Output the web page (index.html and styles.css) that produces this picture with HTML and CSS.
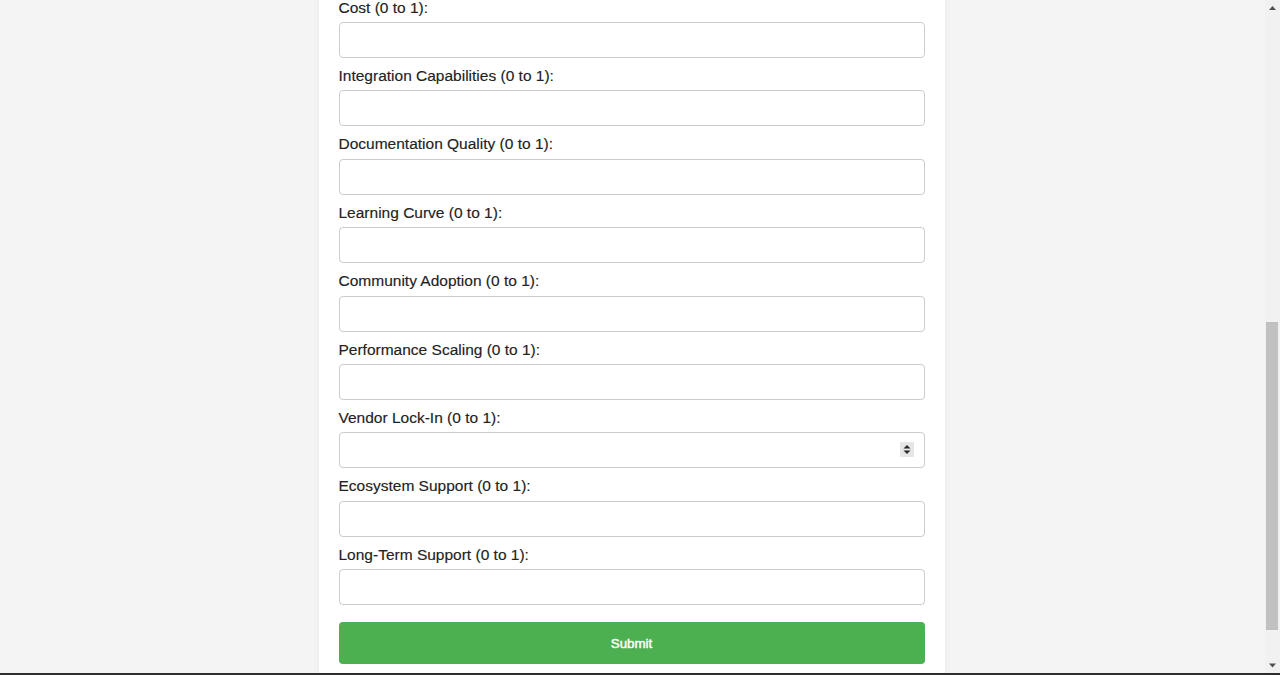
FILE: index.html
```html
<!DOCTYPE html>
<html lang="en">
<head>
<meta charset="utf-8">
<title>Technology Evaluation</title>
<link rel="stylesheet" href="styles.css">
</head>
<body>
<div class="container">
  <h1 class="title">Technology Evaluation</h1>
  <p class="intro">Rate each criterion on a scale from 0 to 1.</p>
  <form class="form">
    <label class="field-label">Scalability (0 to 1):</label>
    <input class="field-input" type="text">
    <label class="field-label">Performance (0 to 1):</label>
    <input class="field-input" type="text">
    <label class="field-label">Security (0 to 1):</label>
    <input class="field-input" type="text">
    <label class="field-label">Ease of Use (0 to 1):</label>
    <input class="field-input" type="text">
    <label class="field-label">Flexibility (0 to 1):</label>
    <input class="field-input" type="text">
    <label class="field-label">Maintainability (0 to 1):</label>
    <input class="field-input" type="text">
    <label class="field-label">Reliability (0 to 1):</label>
    <input class="field-input" type="text">
    <label class="field-label">Community Support (0 to 1):</label>
    <input class="field-input" type="text">
    <label class="field-label" id="cost-label">Cost (0 to 1):</label>
    <input class="field-input" type="text">
    <label class="field-label">Integration Capabilities (0 to 1):</label>
    <input class="field-input" type="text">
    <label class="field-label">Documentation Quality (0 to 1):</label>
    <input class="field-input" type="text">
    <label class="field-label">Learning Curve (0 to 1):</label>
    <input class="field-input" type="text">
    <label class="field-label">Community Adoption (0 to 1):</label>
    <input class="field-input" type="text">
    <label class="field-label">Performance Scaling (0 to 1):</label>
    <input class="field-input" type="text">
    <label class="field-label">Vendor Lock-In (0 to 1):</label>
    <div class="number-wrap">
      <input class="field-input number-input" type="number" step="0.01" min="0" max="1">
      <span class="spinner" aria-hidden="true">
        <svg width="14" height="15" viewBox="0 0 14 15">
          <rect x="0" y="0" width="14" height="15" rx="1" fill="#e6e6e6"/>
          <path d="M3.5 6.5 L7 3 L10.5 6.5 Z" fill="#2b2b2b"/>
          <path d="M3.5 8.5 L7 12 L10.5 8.5 Z" fill="#2b2b2b"/>
        </svg>
      </span>
    </div>
    <label class="field-label">Ecosystem Support (0 to 1):</label>
    <input class="field-input" type="text">
    <label class="field-label">Long-Term Support (0 to 1):</label>
    <input class="field-input" type="text">
    <button class="submit" type="button">Submit</button>
  </form>
</div>
<div class="scrollbar" aria-hidden="true">
  <div class="sb-btn">
    <svg width="15" height="15" viewBox="0 0 15 15"><path d="M4 10 L7.5 6 L11 10 Z" fill="#505050"/></svg>
  </div>
  <div class="sb-track"><div class="sb-thumb"></div></div>
  <div class="sb-btn">
    <svg width="15" height="15" viewBox="0 0 15 15"><path d="M4 5.5 L7.5 9.5 L11 5.5 Z" fill="#505050"/></svg>
  </div>
</div>
<div class="taskbar-edge"></div>
<script src="script.js"></script>
</body>
</html>
```

FILE: styles.css
```css
html, body {
  margin: 0;
}
body {
  background: #f4f4f4;
  font-family: Arial, "Liberation Sans", sans-serif;
  color: #333;
  padding: 20px 17px 57px 0;
}
.container {
  width: 586px;
  margin: 0 auto;
  padding: 20px;
  background: #fff;
  border-radius: 5px;
  box-shadow: 0 0 6px rgba(0, 0, 0, 0.05);
}
.title {
  margin: 0 0 10px;
  font-size: 26px;
  line-height: 30px;
  text-align: center;
}
.intro {
  margin: 0 0 24.9px;
  font-size: 16px;
  line-height: 18.4px;
  text-align: center;
}
.form {
  display: flex;
  flex-direction: column;
}
.field-label {
  display: block;
  font-size: 15.5px;
  line-height: 18.4px;
  margin-bottom: 5px;
  color: #222;
  -webkit-text-stroke: 0.15px #222;
}
.field-input {
  box-sizing: border-box;
  width: 100%;
  height: 36px;
  margin: 0 0 9px;
  padding: 8px 10px;
  border: 1px solid #ccc;
  border-radius: 4px;
  font-family: Arial, "Liberation Sans", sans-serif;
  font-size: 16px;
  background: #fff;
}
.number-wrap {
  position: relative;
}
.number-input {
  -moz-appearance: textfield;
}
.number-input::-webkit-inner-spin-button,
.number-input::-webkit-outer-spin-button {
  -webkit-appearance: none;
  margin: 0;
}
.spinner {
  position: absolute;
  right: 11px;
  top: 10px;
  width: 14px;
  height: 15px;
  display: flex;
}
.submit {
  margin-top: 8px;
  height: 42px;
  width: 100%;
  border: none;
  border-radius: 4px;
  background: #4caf50;
  color: #fff;
  font-family: Arial, "Liberation Sans", sans-serif;
  font-size: 13.33px;
  font-weight: normal;
  -webkit-text-stroke: 0.45px #fff;
}
.scrollbar {
  position: fixed;
  top: 0;
  right: 0;
  bottom: 2px;
  width: 15px;
  background: #f1f1f1;
  display: flex;
  flex-direction: column;
}
.sb-btn {
  height: 15px;
  flex: 0 0 15px;
  display: flex;
}
.sb-track {
  flex: 1 1 auto;
}
.sb-thumb {
  margin: 307px 2px 0 1px;
  height: 308px;
  background: #c1c1c1;
}
.taskbar-edge {
  position: fixed;
  left: 0;
  bottom: 0;
  width: 100vw;
  height: 2px;
  background: #2e2e2e;
}
```

FILE: script.js
```js
(function () {
  function place() {
    var el = document.getElementById('cost-label');
    if (!el) return;
    var top = el.getBoundingClientRect().top + window.scrollY;
    window.scrollTo(0, Math.round(top + 1.5));
  }
  place();
  window.addEventListener('load', place);
})();
```
